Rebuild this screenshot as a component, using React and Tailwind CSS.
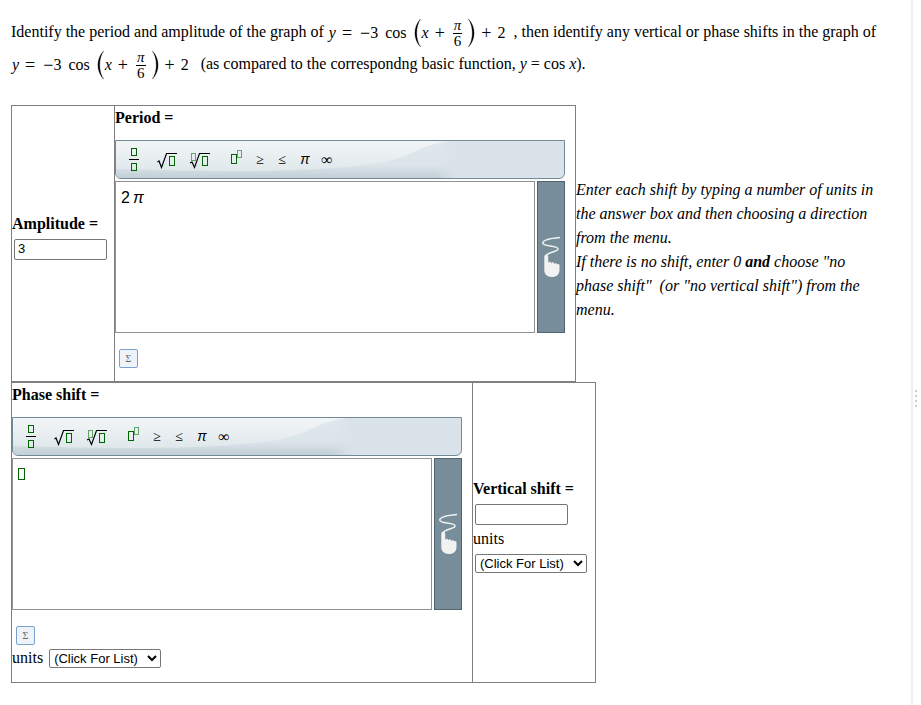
import { useId, useState } from 'react';

const PHASE_OPTIONS = ['(Click For List)', 'left', 'right', 'no phase shift'];
const VERTICAL_OPTIONS = ['(Click For List)', 'up', 'down', 'no vertical shift'];

/* ---------- Inline formula ---------- */
function Paren({ flip }) {
  return (
    <svg viewBox="0 0 7 28" className={`w-[7px] h-7 shrink-0 ${flip ? '-scale-x-100' : ''}`} aria-hidden="true">
      <path d="M6.6 0C-1 7.5 -1 20.5 6.6 28C1.4 20.5 1.4 7.5 6.6 0Z" fill="#000" stroke="#000" strokeWidth=".3" />
    </svg>
  );
}

function Formula() {
  return (
    <span className="inline-flex items-center align-middle h-6 leading-6">
      <i className="pl-px">y</i>
      <span className="text-lg mx-1.5">=</span>
      <span className="text-lg pl-0.5">−</span>
      <span>3</span>
      <span className="mx-[7px]">cos</span>
      <Paren />
      <i className="pl-px">x</i>
      <span className="text-lg mx-1.5">+</span>
      <span className="inline-flex flex-col items-center px-0.5 text-[15px] leading-[15px]">
        <i className="border-b border-black px-px">π</i>
        <span>6</span>
      </span>
      <span className="w-1" />
      <Paren flip />
      <span className="text-lg mx-1.5">+</span>
      <span className="pr-1">2</span>
    </span>
  );
}

/* ---------- Math editor ---------- */
const templates = [
  {
    label: 'Fraction',
    insert: '/',
    cls: 'w-8',
    box: '0 0 32 37',
    art: (
      <>
        <path d="M12.5 7.5h5v7h-5zM12.5 22.5h5v7h-5z" stroke="#006400" />
        <path d="M10 18.5h10" stroke="#000" />
      </>
    ),
  },
  {
    label: 'Square root',
    insert: '√',
    cls: 'w-8',
    box: '0 0 32 37',
    art: (
      <>
        <path d="M6.5 21L8 20L10.5 26.5L15.5 12.5H26" stroke="#000" strokeWidth="1.2" shapeRendering="auto" />
        <path d="M18.5 15.5h5v9h-5z" stroke="#006400" />
      </>
    ),
  },
  {
    label: 'Root',
    insert: '∛',
    cls: 'w-8',
    box: '0 0 32 37',
    art: (
      <>
        <path d="M8.5 12.5h4v7h-4z" stroke="#66a366" />
        <path d="M7 22L9 21L11.5 26.5L16.5 12.5H27" stroke="#000" strokeWidth="1.2" shapeRendering="auto" />
        <path d="M19.5 15.5h5v9h-5z" stroke="#006400" />
      </>
    ),
  },
  {
    label: 'Exponent',
    insert: '^',
    cls: 'w-6 ml-[10px]',
    box: '0 0 24 37',
    art: (
      <>
        <path d="M6.5 13.5h5v9h-5z" stroke="#006400" />
        <path d="M12.5 9.5h4v7h-4z" stroke="#66a366" />
      </>
    ),
  },
];

const symbols = [
  { label: 'Greater than or equal', char: '≥', cls: 'w-[22px] text-sm' },
  { label: 'Less than or equal', char: '≤', cls: 'w-[22px] text-sm' },
  { label: 'Pi', char: 'π', cls: "w-6 text-sm italic font-['Liberation_Sans',sans-serif]" },
  { label: 'Infinity', char: '∞', cls: 'w-5 text-base' },
];

function ToolbarBackground() {
  const id = useId();
  return (
    <svg viewBox="0 0 340 37" className="absolute left-0 top-0 w-[340px] h-[37px]" aria-hidden="true">
      <defs>
        <linearGradient id={`${id}a`} x2="0" y2="1">
          <stop offset="0" stopColor="#f2f5f6" />
          <stop offset="1" stopColor="#e0e8ec" />
        </linearGradient>
        <linearGradient id={`${id}b`} x2="0" y2="1">
          <stop offset="0" stopColor="#dfe8ed" />
          <stop offset=".65" stopColor="#dbe4e9" />
          <stop offset="1" stopColor="#c2cfd7" />
        </linearGradient>
        <linearGradient id={`${id}c`}>
          <stop offset=".94" stopColor="#fff" />
          <stop offset="1" stopColor="#000" />
        </linearGradient>
        <mask id={`${id}d`}>
          <rect width="340" height="37" fill={`url(#${id}c)`} />
        </mask>
      </defs>
      <g mask={`url(#${id}d)`}>
        <rect width="340" height="37" fill={`url(#${id}b)`} />
        <path d="M0 0H340C320 1 308 6 298 11C275 24 225 29 130 30C80 30 40 29 0 28Z" fill={`url(#${id}a)`} />
      </g>
    </svg>
  );
}

function MathEditor({ label, initial = '' }) {
  const [value, setValue] = useState(initial);
  const add = (s) => setValue(v => v + s);

  return (
    <div className="w-[450px] pb-px">
      <div className="relative flex h-[39px] pl-[3px] border border-[#708a98] rounded-b-md bg-[#dbe3ea] overflow-hidden">
        <ToolbarBackground />
        {templates.map(t => (
          <button key={t.label} type="button" aria-label={t.label} onClick={() => add(t.insert)} className={`relative ${t.cls}`}>
            <svg viewBox={t.box} className="w-full h-[37px]" fill="none" shapeRendering="crispEdges">
              {t.art}
            </svg>
          </button>
        ))}
        {symbols.map(s => (
          <button key={s.label} type="button" aria-label={s.label} onClick={() => add(s.char)} className={`relative leading-[37px] ${s.cls}`}>
            {s.char}
          </button>
        ))}
      </div>

      <div className="flex gap-0.5 mt-0.5 h-[152px]">
        <div className="relative flex-1 border border-[#919191] bg-white">
          <textarea
            aria-label={label}
            value={value}
            onChange={(e) => setValue(e.target.value)}
            className="block w-full h-full resize-none px-[5px] py-1 text-transparent outline-none"
          />
          {/* Typeset view over the raw text */}
          <div className="absolute left-[5px] top-1 flex gap-[3px] pointer-events-none font-['Liberation_Sans',sans-serif] text-base leading-6" aria-hidden="true">
            {value === '' && <span className="w-[7px] h-3 mt-[5px] border border-[#006400]" />}
            {[...value].map((c, i) => (c === 'π' ? <i key={i}>{c}</i> : <span key={i}>{c}</span>))}
          </div>
        </div>
        <button type="button" aria-label="Handwriting" className="w-7 flex items-center justify-center border border-[#4f6370] bg-[#778e9a]">
          <svg viewBox="0 0 20 42" className="w-5 h-[42px]" fill="none">
            <path d="M19 1.5C8 2.5 2 4.5 1.8 7C1.6 11 17 9 17 13C17 16 6 16 5 20" stroke="#f2f2f2" strokeWidth="1.5" />
            <path d="M3.3 20.5C3.3 18 7 18 7.2 20.5V27C7.8 25.4 9.8 25.4 10.4 27.4C11 25.8 13 26 13.5 28C14.2 26.6 15.8 27 16.2 28.4C17 27.4 18.5 28 18.5 29.4V34C18.5 38.5 15.4 41 11 41C6 41 3.3 38 3.3 34Z" fill="#f2f2f2" />
          </svg>
        </button>
      </div>

      <button type="button" aria-label="Open equation editor" className="flex items-center justify-center size-[19px] mt-4 ml-1 border border-[#7ba2ce] rounded-xs bg-[#edf3f9] text-[10px] leading-none text-[#666]">
        Σ
      </button>
    </div>
  );
}

/* ---------- Plain controls ---------- */
function NumberBox({ id, initial = '' }) {
  const [value, setValue] = useState(initial);
  return (
    <input
      id={id}
      type="text"
      value={value}
      onChange={(e) => setValue(e.target.value)}
      className="block w-[93px] h-[21px] mx-0.5 px-[3px] border border-[#767676] rounded-xs bg-white font-['Liberation_Sans',sans-serif] text-[13px]"
    />
  );
}

function Menu({ id, options }) {
  return (
    <select id={id} className="w-28 h-[19px] border border-[#767676] rounded-xs bg-white font-['Liberation_Sans',sans-serif] text-[13px]">
      {options.map(o => <option key={o}>{o}</option>)}
    </select>
  );
}

export default function App() {
  return (
    <div className="flex min-h-screen bg-white font-['Liberation_Serif',serif] text-base leading-6 text-black">
      <main className="flex-1 min-w-0 pt-4 pl-[11px] pr-3">
        <p className="leading-8">
          Identify the period and amplitude of the graph of <Formula /> , then identify any vertical or phase shifts in the graph of <Formula />
          &nbsp; (as compared to the correspondng basic function, <i>y</i> = cos <i>x</i>).
        </p>

        {/* Amplitude and period */}
        <div className="flex items-center mt-[25px]">
          <div className="flex shrink-0 border border-[#808080]">
            <div className="flex flex-col justify-center pr-[5px] pb-4">
              <label htmlFor="amplitude" className="font-bold mb-[3px]">Amplitude =</label>
              <NumberBox id="amplitude" initial="3" />
            </div>
            <div className="border-l border-[#808080] pr-[10px] pb-3">
              <p className="font-bold mb-[10px]">Period =</p>
              <MathEditor label="Period" initial="2π" />
            </div>
          </div>
          <p className="flex-1 italic pt-3 pr-5">
            Enter each shift by typing a number of units in the answer box and then choosing a direction from the menu.
            <br />
            If there is no shift, enter 0 <b>and</b> choose "no phase shift"&nbsp; (or "no vertical shift") from the menu.
          </p>
        </div>

        {/* Shifts */}
        <div className="flex w-fit border border-[#808080]">
          <div className="pr-[10px] pb-3">
            <p className="font-bold mb-[10px]">Phase shift =</p>
            <MathEditor label="Phase shift" />
            <div className="flex items-center gap-1.5">
              <label htmlFor="phase-units">units</label>
              <Menu id="phase-units" options={PHASE_OPTIONS} />
            </div>
          </div>
          <div className="flex flex-col items-start justify-center border-l border-[#808080] pr-1.5 pb-4">
            <label htmlFor="vertical" className="font-bold mb-[3px]">Vertical shift =</label>
            <NumberBox id="vertical" />
            <label htmlFor="vertical-units" className="mt-0.5 mb-[3px]">units</label>
            <div className="flex mx-0.5">
              <Menu id="vertical-units" options={VERTICAL_OPTIONS} />
            </div>
          </div>
        </div>
      </main>

      {/* Splitter */}
      <div className="flex flex-col gap-[3px] w-[10px] shrink-0 pl-0.5 pt-[390px] border-l-2 border-[#eee]">
        <span className="size-0.5 bg-[#ccc]" />
        <span className="size-0.5 bg-[#ccc]" />
        <span className="size-0.5 bg-[#ccc]" />
        <span className="size-0.5 bg-[#ccc]" />
      </div>
    </div>
  );
}
